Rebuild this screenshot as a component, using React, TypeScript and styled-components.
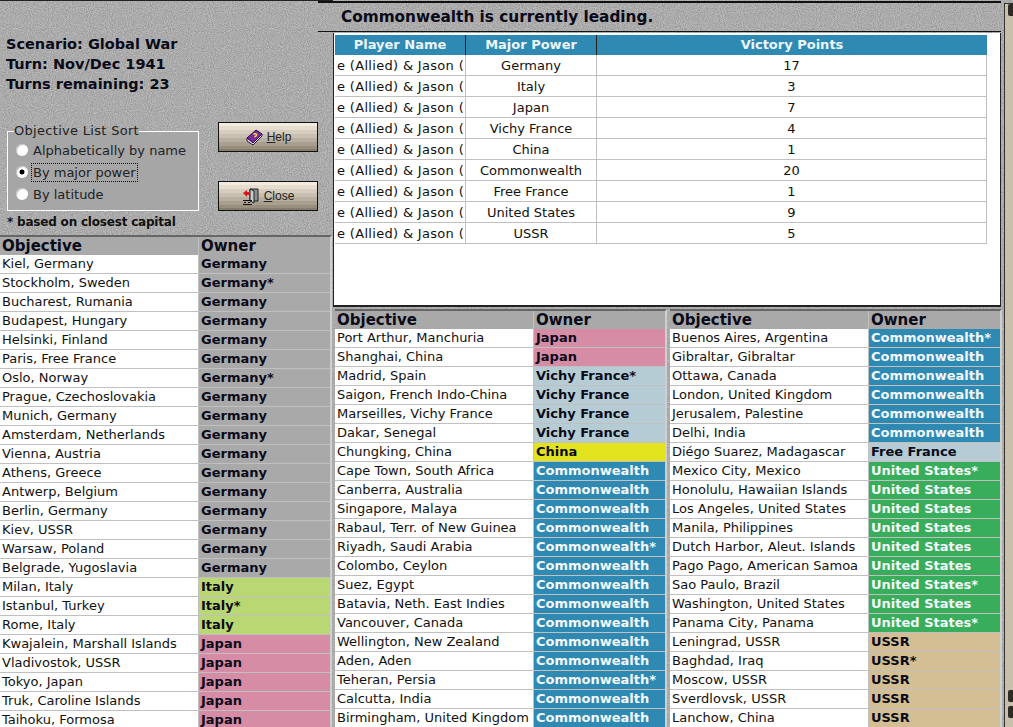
import React from 'react'
import styled, {createGlobalStyle} from 'styled-components'

const NOISE = `url("data:image/svg+xml,%3Csvg xmlns='http://www.w3.org/2000/svg' width='256' height='256'%3E%3Cfilter id='n' color-interpolation-filters='sRGB'%3E%3CfeTurbulence type='fractalNoise' baseFrequency='0.95' numOctaves='2' seed='4'/%3E%3CfeColorMatrix values='0.28 0 0 0 0.53 0.28 0 0 0 0.53 0.28 0 0 0 0.53 0 0 0 0 1'/%3E%3C/filter%3E%3Crect width='256' height='256' filter='url(%23n)'/%3E%3C/svg%3E")`

const Global = createGlobalStyle`
  html, body {
    margin: 0;
    padding: 0;
    height: 727px;
    overflow: hidden;
    background: #adadad;
  }
  * { box-sizing: border-box; }
`

const Page = styled.div`
  width: 1013px;
  height: 727px;
  overflow: hidden;
  display: grid;
  grid-template-columns: 333px 668px 12px;
  font-family: "DejaVu Sans", Verdana, sans-serif;
  color: #000;
  background-color: #adadad;
  background-image: ${NOISE};
`

const LeftColumn = styled.div`
  border-top: 1px solid #222;
  display: flex;
  flex-direction: column;
`

const Info = styled.div`
  padding: 33px 0 0 6px;
  font-weight: bold;
  font-size: 14.5px;
  line-height: 20px;
  color: #0a0a18;
`

const ControlRow = styled.div`
  margin-top: 28px;
  padding-left: 7px;
  display: flex;
  align-items: flex-start;
`

const SortBox = styled.fieldset`
  width: 192px;
  height: 88px;
  margin: 1px 0 0;
  padding: 0 0 0 8px;
  background: #a6a6a6;
  border: 1px solid #fff;
  font-size: 13px;
  display: flex;
  flex-direction: column;
  legend {
    padding: 0;
    margin-left: -2px;
    line-height: 16px;
    letter-spacing: 0.3px;
    color: #222;
  }
`

const Radio = styled.div`
  height: 22px;
  display: flex;
  align-items: center;
  gap: 4px;
  color: #222;
`

const RadioDot = styled.span<{on?: boolean}>`
  width: 12px;
  height: 12px;
  border-radius: 50%;
  background: ${({on}) => on ? 'radial-gradient(circle, #000 0 2.2px, #fff 2.8px)' : '#fff'};
  box-shadow: inset 1px 1px 0 #bbb;
`

const RadioLabel = styled.span<{focused?: boolean}>`
  padding: 0 1px;
  outline: ${({focused}) => focused ? '1px dotted #111' : 'none'};
  line-height: 17px;
`

const Buttons = styled.div`
  margin-left: 19px;
  display: flex;
  flex-direction: column;
  gap: 29px;
`

const Button = styled.button`
  width: 100px;
  height: 30px;
  padding: 0;
  border: 1px solid #111;
  background: linear-gradient(to bottom, #f2ebdf 0 3px, #e6ddcf 3px 7px, #d6cdbe 7px 11px, #c8bfb0 11px 15px, #b8afa0 15px 19px, #a89f8f 19px 23px, #978e7e 23px 26px, #857c6c 26px);
  font-family: "Liberation Sans", Arial, sans-serif;
  font-size: 12px;
  color: #222;
  display: flex;
  align-items: center;
  justify-content: center;
  gap: 4px;
  u { text-underline-offset: 1px; }
`

const Note = styled.div`
  margin: 3px 0 0 7px;
  font-weight: bold;
  font-size: 12px;
  line-height: 17px;
  letter-spacing: -0.2px;
  color: #111;
`

const ObjectiveTable = styled.div`
  border-top: 2px solid #666;
  border-right: 2px solid #cfcfcf;
  background: #b8b8b8;
`

const LeftTable = styled(ObjectiveTable)`
  width: 332px;
  margin-top: 4px;
`

const HeadRow = styled.div`
  display: grid;
  grid-template-columns: 198px 1fr;
  height: 18px;
  column-gap: 1px;
  background: #c0c0c0;
  border-bottom: 1px solid #c0c0c0;
`

const HeadCell = styled.div`
  background: #a9a9a9;
  padding-left: 2px;
  font-weight: bold;
  font-size: 15px;
  line-height: 19px;
  color: #0a0a18;
`

const Row = styled.div`
  display: grid;
  grid-template-columns: 198px 1fr;
  height: 19px;
  column-gap: 1px;
  background: #c0c0c0;
  border-bottom: 1px solid #c0c0c0;
`

const NameCell = styled.div`
  background: #fff;
  padding-left: 2px;
  font-size: 13px;
  line-height: 17px;
  white-space: nowrap;
  overflow: hidden;
  color: #111;
`

const OWNER_COLORS: Record<string, string> = {
  Germany: '#a9a9a9',
  Italy: '#b9d873',
  Japan: '#d78ca6',
  'Vichy France': '#b5ccd5',
  'Free France': '#b5ccd5',
  China: '#e3e31d',
  Commonwealth: '#2e8ab3',
  'United States': '#38ae5d',
  USSR: '#d4bf95',
}

const OwnerCell = styled.div<{owner: string}>`
  background: ${({owner}) => OWNER_COLORS[owner]};
  color: ${({owner}) => (owner === 'Commonwealth' || owner === 'United States') ? '#f4f8fa' : '#0a0a18'};
  padding-left: 2px;
  font-weight: bold;
  font-size: 13px;
  line-height: 17px;
  white-space: nowrap;
  overflow: hidden;
`

const RightColumn = styled.div`
  display: flex;
  flex-direction: column;
`

const Title = styled.div`
  position: relative;
  height: 32px;
  margin-top: 1px;
  padding-left: 8px;
  font-weight: bold;
  font-size: 15.3px;
  line-height: 33px;
  color: #0a0a18;
  &::before, &::after {
    content: '';
    position: absolute;
    left: -15px;
    right: 0;
    background: #111;
  }
  &::before {
    top: 0;
    height: 2px;
  }
  &::after {
    bottom: 1px;
    height: 1px;
  }
`

const ScorePanel = styled.div`
  height: 274px;
  padding: 2px 13px 0 1px;
  background: #fff;
  border-left: 1px solid #222;
  border-right: 1px solid #222;
  border-bottom: 2px solid #222;
`

const ScoreHead = styled.div`
  display: grid;
  grid-template-columns: 130px 130px 1fr;
  column-gap: 1px;
  height: 20px;
  background: #222;
  border-bottom: 1px solid #222;
`

const ScoreHeadCell = styled.div`
  background: #2e8ab3;
  color: #eef5f8;
  text-align: center;
  font-weight: bold;
  font-size: 13px;
  line-height: 20px;
`

const ScoreRow = styled.div`
  display: grid;
  grid-template-columns: 130px 130px 1fr;
  column-gap: 1px;
  height: 21px;
  background: #c0c0c0;
  border-bottom: 1px solid #c0c0c0;
  border-right: 1px solid #c0c0c0;
`

const ScoreCell = styled.div<{left?: boolean}>`
  background: #fff;
  font-size: 13px;
  line-height: 22px;
  text-align: ${({left}) => left ? 'left' : 'center'};
  padding-left: ${({left}) => left ? '2px' : '0'};
  letter-spacing: ${({left}) => left ? '0.32px' : '0'};
  white-space: nowrap;
  overflow: hidden;
  color: #111;
`

const Lists = styled.div`
  margin-top: 2px;
  padding-left: 2px;
  display: grid;
  grid-template-columns: 332px 332px;
  gap: 3px;
`

const Strip = styled.div`
  padding-left: 3px;
  display: flex;
`

const Rail = styled.div`
  position: relative;
  flex: 1;
  margin-top: 3px;
  background: #c9c0ab;
  border-left: 1px solid #333;
  border-top: 1px solid #333;
`

const Knob = styled.span<{y: number}>`
  position: absolute;
  top: ${({y}) => y}px;
  left: 3px;
  right: 0;
  height: 12px;
  background: #2e2b25;
  border-radius: 2px 0 0 2px;
`

const BookIcon = () => (
  <svg width="18" height="18" viewBox="0 0 18 18">
    <path d="M2 10 11 2l6 4-9 9z" fill="#7a2a9c" stroke="#2c0f45" strokeWidth="1" />
    <path d="M2 10v3l6 4 9-9V6l-9 9z" fill="#efeaf2" stroke="#2c0f45" strokeWidth="1" />
    <path d="M8.5 6.5c1-1.2 3.500-.8 3 .7-.3.9-1.500.9-1.800 2" fill="none" stroke="#f2d63a" strokeWidth="1.500" />
  </svg>
)

const DoorIcon = () => (
  <svg width="18" height="18" viewBox="0 0 18 18">
    <path d="M8 2h8v12H8z" fill="#8a8f8f" stroke="#222" strokeWidth="1" />
    <path d="M8 2l4 2v12l-4-2z" fill="#c9cccc" stroke="#222" strokeWidth="1" />
    <path d="M1 6l4-3v2h3v3H5v2z" fill="#e0141c" />
    <path d="M1 13h9v1H1zM2 15h2v1H2zM6 15h2v1H6zM1 17h9v1H1z" fill="#111" />
  </svg>
)

const scores: [string, number][] = [
  ['Germany', 17], ['Italy', 3], ['Japan', 7], ['Vichy France', 4], ['China', 1],
  ['Commonwealth', 20], ['Free France', 1], ['United States', 9], ['USSR', 5],
]

type Objective = [string, string, boolean?]

const leftList: Objective[] = [
  ['Kiel, Germany', 'Germany'],
  ['Stockholm, Sweden', 'Germany', true],
  ['Bucharest, Rumania', 'Germany'],
  ['Budapest, Hungary', 'Germany'],
  ['Helsinki, Finland', 'Germany'],
  ['Paris, Free France', 'Germany'],
  ['Oslo, Norway', 'Germany', true],
  ['Prague, Czechoslovakia', 'Germany'],
  ['Munich, Germany', 'Germany'],
  ['Amsterdam, Netherlands', 'Germany'],
  ['Vienna, Austria', 'Germany'],
  ['Athens, Greece', 'Germany'],
  ['Antwerp, Belgium', 'Germany'],
  ['Berlin, Germany', 'Germany'],
  ['Kiev, USSR', 'Germany'],
  ['Warsaw, Poland', 'Germany'],
  ['Belgrade, Yugoslavia', 'Germany'],
  ['Milan, Italy', 'Italy'],
  ['Istanbul, Turkey', 'Italy', true],
  ['Rome, Italy', 'Italy'],
  ['Kwajalein, Marshall Islands', 'Japan'],
  ['Vladivostok, USSR', 'Japan'],
  ['Tokyo, Japan', 'Japan'],
  ['Truk, Caroline Islands', 'Japan'],
  ['Taihoku, Formosa', 'Japan'],
]

const middleList: Objective[] = [
  ['Port Arthur, Manchuria', 'Japan'],
  ['Shanghai, China', 'Japan'],
  ['Madrid, Spain', 'Vichy France', true],
  ['Saigon, French Indo-China', 'Vichy France'],
  ['Marseilles, Vichy France', 'Vichy France'],
  ['Dakar, Senegal', 'Vichy France'],
  ['Chungking, China', 'China'],
  ['Cape Town, South Africa', 'Commonwealth'],
  ['Canberra, Australia', 'Commonwealth'],
  ['Singapore, Malaya', 'Commonwealth'],
  ['Rabaul, Terr. of New Guinea', 'Commonwealth'],
  ['Riyadh, Saudi Arabia', 'Commonwealth', true],
  ['Colombo, Ceylon', 'Commonwealth'],
  ['Suez, Egypt', 'Commonwealth'],
  ['Batavia, Neth. East Indies', 'Commonwealth'],
  ['Vancouver, Canada', 'Commonwealth'],
  ['Wellington, New Zealand', 'Commonwealth'],
  ['Aden, Aden', 'Commonwealth'],
  ['Teheran, Persia', 'Commonwealth', true],
  ['Calcutta, India', 'Commonwealth'],
  ['Birmingham, United Kingdom', 'Commonwealth'],
]

const rightList: Objective[] = [
  ['Buenos Aires, Argentina', 'Commonwealth', true],
  ['Gibraltar, Gibraltar', 'Commonwealth'],
  ['Ottawa, Canada', 'Commonwealth'],
  ['London, United Kingdom', 'Commonwealth'],
  ['Jerusalem, Palestine', 'Commonwealth'],
  ['Delhi, India', 'Commonwealth'],
  ['Diégo Suarez, Madagascar', 'Free France'],
  ['Mexico City, Mexico', 'United States', true],
  ['Honolulu, Hawaiian Islands', 'United States'],
  ['Los Angeles, United States', 'United States'],
  ['Manila, Philippines', 'United States'],
  ['Dutch Harbor, Aleut. Islands', 'United States'],
  ['Pago Pago, American Samoa', 'United States'],
  ['Sao Paulo, Brazil', 'United States', true],
  ['Washington, United States', 'United States'],
  ['Panama City, Panama', 'United States', true],
  ['Leningrad, USSR', 'USSR'],
  ['Baghdad, Iraq', 'USSR', true],
  ['Moscow, USSR', 'USSR'],
  ['Sverdlovsk, USSR', 'USSR'],
  ['Lanchow, China', 'USSR'],
]

const Rows = ({items}: {items: Objective[]}) => (
  <>
    <HeadRow>
      <HeadCell>Objective</HeadCell>
      <HeadCell>Owner</HeadCell>
    </HeadRow>
    {items.map(([name, owner, star]) => (
      <Row key={name}>
        <NameCell>{name}</NameCell>
        <OwnerCell owner={owner}>{owner}{star ? '*' : ''}</OwnerCell>
      </Row>
    ))}
  </>
)

export default function App() {
  return (
    <Page>
      <Global />
      <LeftColumn>
        <Info>
          <div>Scenario: Global War</div>
          <div>Turn: Nov/Dec 1941</div>
          <div>Turns remaining: 23</div>
        </Info>
        <ControlRow>
          <SortBox>
            <legend>Objective List Sort</legend>
            <Radio><RadioDot /><RadioLabel>Alphabetically by name</RadioLabel></Radio>
            <Radio><RadioDot on /><RadioLabel focused>By major power</RadioLabel></Radio>
            <Radio><RadioDot /><RadioLabel>By latitude</RadioLabel></Radio>
          </SortBox>
          <Buttons>
            <Button><BookIcon /><span><u>H</u>elp</span></Button>
            <Button><DoorIcon /><span><u>C</u>lose</span></Button>
          </Buttons>
        </ControlRow>
        <Note>* based on closest capital</Note>
        <LeftTable><Rows items={leftList} /></LeftTable>
      </LeftColumn>
      <RightColumn>
        <Title>Commonwealth is currently leading.</Title>
        <ScorePanel>
          <ScoreHead>
            <ScoreHeadCell>Player Name</ScoreHeadCell>
            <ScoreHeadCell>Major Power</ScoreHeadCell>
            <ScoreHeadCell>Victory Points</ScoreHeadCell>
          </ScoreHead>
          {scores.map(([power, points]) => (
            <ScoreRow key={power}>
              <ScoreCell left>e (Allied) &amp; Jason (</ScoreCell>
              <ScoreCell>{power}</ScoreCell>
              <ScoreCell>{points}</ScoreCell>
            </ScoreRow>
          ))}
        </ScorePanel>
        <Lists>
          <ObjectiveTable><Rows items={middleList} /></ObjectiveTable>
          <ObjectiveTable><Rows items={rightList} /></ObjectiveTable>
        </Lists>
      </RightColumn>
      <Strip>
        <Rail>
          <Knob y={0} />
          <Knob y={686} />
          <Knob y={702} />
        </Rail>
      </Strip>
    </Page>
  )
}
